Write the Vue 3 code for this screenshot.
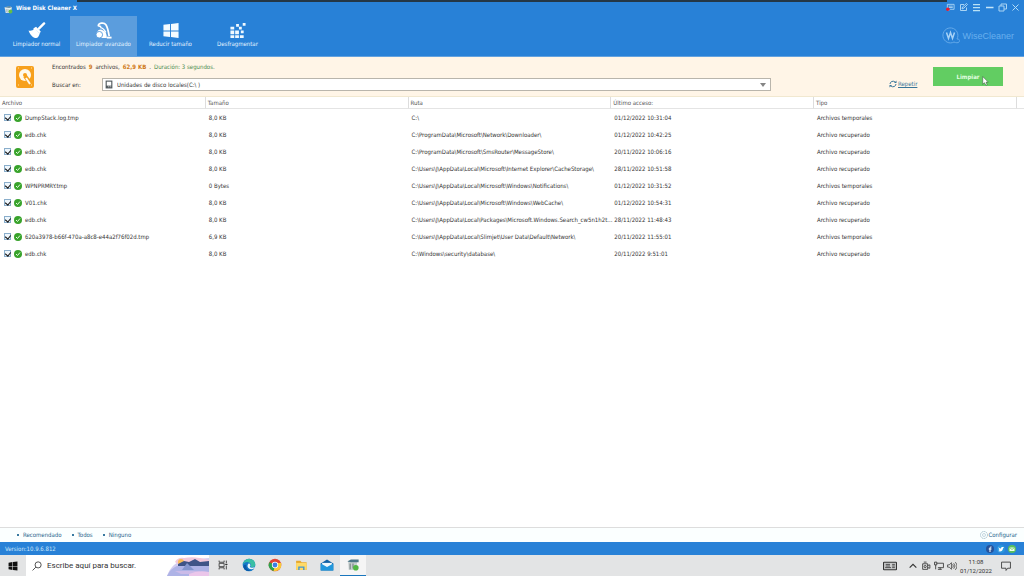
<script setup>
import { ref } from 'vue'

const tabs = [
  { id: 'normal', label: 'Limpiador normal' },
  { id: 'advanced', label: 'Limpiador avanzado' },
  { id: 'reduce', label: 'Reducir tamaño' },
  { id: 'defrag', label: 'Desfragmentar' },
]
const activeTab = ref('advanced')
const query = ref('')

const columns = ['Archivo', 'Tamaño', 'Ruta', 'Último acceso:', 'Tipo']
const temp = 'Archivos temporales'
const recovered = 'Archivo recuperado'
const files = ref([
  { name: 'DumpStack.log.tmp', size: '8,0 KB', path: 'C:\\', date: '01/12/2022 10:31:04', type: temp, checked: true },
  { name: 'edb.chk', size: '8,0 KB', path: 'C:\\ProgramData\\Microsoft\\Network\\Downloader\\', date: '01/12/2022 10:42:25', type: recovered, checked: true },
  { name: 'edb.chk', size: '8,0 KB', path: 'C:\\ProgramData\\Microsoft\\SmsRouter\\MessageStore\\', date: '20/11/2022 10:06:16', type: recovered, checked: true },
  { name: 'edb.chk', size: '8,0 KB', path: 'C:\\Users\\J\\AppData\\Local\\Microsoft\\Internet Explorer\\CacheStorage\\', date: '28/11/2022 10:51:58', type: recovered, checked: true },
  { name: 'WPNPRMRY.tmp', size: '0 Bytes', path: 'C:\\Users\\J\\AppData\\Local\\Microsoft\\Windows\\Notifications\\', date: '01/12/2022 10:31:52', type: temp, checked: true },
  { name: 'V01.chk', size: '8,0 KB', path: 'C:\\Users\\J\\AppData\\Local\\Microsoft\\Windows\\WebCache\\', date: '01/12/2022 10:54:31', type: recovered, checked: true },
  { name: 'edb.chk', size: '8,0 KB', path: 'C:\\Users\\J\\AppData\\Local\\Packages\\Microsoft.Windows.Search_cw5n1h2t...', date: '28/11/2022 11:48:43', type: recovered, checked: true },
  { name: '620a3978-b66f-470a-a8c8-e44a2f76f02d.tmp', size: '6,9 KB', path: 'C:\\Users\\J\\AppData\\Local\\Slimjet\\User Data\\Default\\Network\\', date: '20/11/2022 11:55:01', type: temp, checked: true },
  { name: 'edb.chk', size: '8,0 KB', path: 'C:\\Windows\\security\\database\\', date: '20/11/2022 9:51:01', type: recovered, checked: true },
])
const setAll = (value) => files.value.forEach((f) => (f.checked = value))
</script>

<template>
  <div class="screen">
    <header class="top">
      <div class="strip"></div>
      <div class="titlebar">
        <svg class="app-icon" viewBox="0 0 16 16"><path d="M1 4l9-2 4 2-2 10H3z" fill="#e4eef0" /><path d="M1 4l9-2 4 2-5 1z" fill="#416f86" /><path d="M4 7v6M7 7v7" stroke="#7d8f96" /><circle cx="11.500" cy="11.500" r="3.500" fill="#64bd48" /></svg>
        <h1>Wise Disk Cleaner X</h1>
        <div class="window-tools">
          <button aria-label="Comentarios"><svg viewBox="0 0 20 18"><path d="M3 2h15v11H9l-4 3v-3H3z" fill="none" stroke="#a9d4f4" stroke-width="2" /><path d="M6 6h9M6 9h9" stroke="#a9d4f4" stroke-width="2" /><circle cx="4" cy="13" r="4" fill="#e81830" /></svg></button>
          <button aria-label="Editar"><svg viewBox="0 0 18 18"><path d="M10 3H3v12h12V9M6 12l1-4 8-7 2 2-7 7z" fill="none" stroke="#a9d4f4" stroke-width="2" /></svg></button>
          <button aria-label="Menú"><svg viewBox="0 0 18 18"><path d="M2 3h14M2 9h14M2 15h14" stroke="#b9e2f5" stroke-width="2.500" /></svg></button>
          <button aria-label="Minimizar"><svg viewBox="0 0 18 18"><path d="M2 9h15" stroke="#c4e5f8" stroke-width="3" /></svg></button>
          <button aria-label="Restaurar"><svg viewBox="0 0 18 18"><path d="M2 6h10v10H2zM6 6V2h11v10h-5" fill="none" stroke="#a9d4f4" stroke-width="2" /></svg></button>
          <button aria-label="Cerrar"><svg viewBox="0 0 18 18"><path d="M3 3l12 12M15 3L3 15" stroke="#b4dcf7" stroke-width="2" /></svg></button>
        </div>
      </div>
      <div class="ribbon">
        <nav class="tabs">
          <button v-for="tab in tabs" :key="tab.id" class="tab" :class="{ active: tab.id === activeTab }" @click="activeTab = tab.id">
            <svg v-if="tab.id === 'normal'" viewBox="0 0 18 18"><path d="M16.500 1.500L11 7" stroke="#fff" stroke-width="2.500" stroke-linecap="round" /><path d="M8 5l5 5-1 2-7-5z" fill="#fff" /><path d="M6 7l6 5c-1 3-2 5-4 5-3 0-6-3-8-8 2 1 5 0 6-2z" fill="#fff" /></svg>
            <svg v-else-if="tab.id === 'advanced'" viewBox="0 0 18 18"><path d="M6 5L3 4C3 1 9 0 11 3q2 3 3.500 12" fill="none" stroke="#fff" stroke-width="1.800" stroke-linejoin="round" /><path d="M5 6q3 0 6 5" fill="none" stroke="#fff" stroke-width="1.300" /><path d="M12 16.500h5" stroke="#fff" stroke-width="2" /><path d="M2 10c1-2 4-3 6-1 3 1 4 4 4 8H6z" fill="#fff" /><circle cx="4" cy="13.500" r="3.500" fill="#fff" stroke="#5b9ddd" /></svg>
            <svg v-else-if="tab.id === 'reduce'" viewBox="0 0 18 18"><path d="M1 3l7-1v7H1zM9 2l8-1v8H9zM1 10h7v6l-7-1zM9 10h8v7l-8-1z" fill="#f4fbff" /></svg>
            <svg v-else viewBox="0 0 18 18"><path d="M1 5h4v3H1zM1 9h4v4H1zM6 9h4v4H6zM1 14h4v3H1zM6 14h4v3H6zM11 14h4v3h-4zM7 2h3v3H7zM14 1h3v3h-3zM10 5h3v3h-3zM12 9h3v3h-3z" fill="#f0f9ff" /></svg>
            <span>{{ tab.label }}</span>
          </button>
        </nav>
        <div class="brand">
          <svg viewBox="0 0 18 18"><path d="M15 12a7.500 7.500 0 1 0-3 3c2 1 4 1 5 0s1-3-2-3" fill="none" stroke="#65aaea" /><path d="M4.500 5.500l2 6 2-6 2 6 2-6" fill="none" stroke="#a7d2f7" stroke-width="1.500" /></svg>
          <span>WiseCleaner</span>
        </div>
      </div>
    </header>

    <section class="panel">
      <svg class="disk" viewBox="0 0 20 22"><rect x="1" width="18" height="22" rx="2" fill="#f7a01c" /><circle cx="10" cy="9" r="6" fill="#fff9ed" /><circle cx="10" cy="9" r="2" fill="#f7a01c" /><path d="M10 10l5 7" stroke="#f7a01c" stroke-width="4" /><path d="M11 12l4 6" stroke="#fff9ed" stroke-width="2" /><path d="M3 2h1M16 2h1M3 19h1M16 19h1" stroke="#ffe0a0" /></svg>
      <div class="scan">
        <p class="summary"><span>Encontrados</span><b>9</b><span>archivos,</span><b>62,9 KB</b><span>.</span><em>Duración: 3 segundos.</em></p>
        <div class="search-row">
          <label for="drive">Buscar en:</label>
          <div class="drive-box">
            <svg viewBox="0 0 14 16"><rect x="1" y="1" width="12" height="14" fill="#50585c" /><rect x="3" y="3" width="8" height="7" fill="#fff" /><path d="M5 12h2M8 12h3" stroke="#fff" /></svg>
            <select id="drive"><option>Unidades de disco locales(C:\ )</option></select>
            <i class="arrow"></i>
          </div>
        </div>
      </div>
      <a class="repeat" href="#"><svg viewBox="0 0 16 16"><path d="M2 8a6 6 0 0 1 10-4M14 8a6 6 0 0 1-10 4" fill="none" stroke="#387599" stroke-width="2" /><path d="M10 6h5V1zM6 10H1v5z" fill="#387599" /></svg><span>Repetir</span></a>
      <button class="clean">Limpiar
        <svg class="cursor" viewBox="0 0 12 18"><path d="M1 1v14l3-3 3 5 2-1-2-5h4z" fill="#fff" stroke="#38583a" /></svg>
      </button>
    </section>

    <main class="list">
      <table>
        <colgroup><col class="first" /><col v-for="n in 4" :key="n" class="mid" /><col /></colgroup>
        <thead>
          <tr><th v-for="c in columns" :key="c" scope="col">{{ c }}</th><th></th></tr>
        </thead>
        <tbody>
          <tr v-for="(file, i) in files" :key="i">
            <td>
              <label class="file">
                <input v-model="file.checked" type="checkbox" />
                <svg viewBox="0 0 16 16"><circle cx="8" cy="8" r="8" fill="#39a32c" /><path d="M4 8l3 3 5-6" fill="none" stroke="#e4ffe0" stroke-width="2" /></svg>
                <span>{{ file.name }}</span>
              </label>
            </td>
            <td>{{ file.size }}</td>
            <td>{{ file.path }}</td>
            <td>{{ file.date }}</td>
            <td>{{ file.type }}</td>
            <td></td>
          </tr>
        </tbody>
      </table>
    </main>

    <div class="options">
      <button @click="setAll(true)"><i></i>Recomendado</button>
      <button @click="setAll(true)"><i></i>Todos</button>
      <button @click="setAll(false)"><i></i>Ninguno</button>
      <button class="configure"><svg viewBox="0 0 16 16"><circle cx="8" cy="8" r="7" fill="none" stroke="#8fb0c0" stroke-width="1.500" stroke-dasharray="3 1" /><circle cx="8" cy="8" r="3" fill="none" stroke="#8fb0c0" /></svg>Configurar</button>
    </div>

    <footer class="version">
      <span>Version:10.9.6.812</span>
      <a href="#" aria-label="Facebook"><svg viewBox="0 0 16 16"><circle cx="8" cy="8" r="8" fill="#24529b" /><path d="M11 4H9.500Q8 4 8 6v8M5.500 8H11" fill="none" stroke="#fff" stroke-width="2" /></svg></a>
      <a href="#" aria-label="Twitter"><svg viewBox="0 0 16 16"><circle cx="8" cy="8" r="8" fill="#2a96dc" /><path d="M3 4q2 3 5 3 0-4 3-3l3 0-2 3q-1 6-6 6l-4-1 3-1-2-2h2Q3 7 3 4z" fill="#fff" /></svg></a>
      <a href="#" aria-label="Correo"><svg viewBox="0 0 16 16"><circle cx="8" cy="8" r="8" fill="#58bf5c" /><path d="M3 5h10v7H3z" fill="#efffed" /><path d="M3 5l5 4 5-4" fill="none" stroke="#58bf5c" stroke-width="1.500" /></svg></a>
    </footer>

    <div class="taskbar">
      <button class="start" aria-label="Inicio"><svg viewBox="0 0 18 18"><path d="M1 3l7-1v7H1zM9 2l8-1v8H9zM1 10h7v6l-7-1zM9 10h8v7l-8-1z" fill="#111" /></svg></button>
      <label class="find">
        <svg class="lens" viewBox="0 0 18 18"><circle cx="11" cy="7" r="5.500" fill="none" stroke="#333" stroke-width="1.500" /><path d="M7 11l-6 6" stroke="#333" stroke-width="1.500" /></svg>
        <input v-model="query" type="text" aria-label="Buscar" placeholder="Escribe aquí para buscar." />
        <svg class="scene" viewBox="0 0 42 21"><path d="M0 21Q5 7 18 5L42 3v18z" fill="#d2cdf0" /><path d="M8 7q3-5 9-4 12-2 25 2v5H12z" fill="#f2c9dc" /><circle cx="14" cy="7" r="3" fill="#f8bc58" /><path d="M11 9l6-3 5 1 6-3 5 3 9-1v5H11z" fill="#3f5487" /><path d="M0 21q4-8 10-10h32v10z" fill="#aeb3e6" /><path d="M15 15l5-7 7 7z" fill="#8495cd" /><path d="M8 16h26l-5 3H14z" fill="#cbbbe8" /><path d="M22 19q9-4 20-2v4H22z" fill="#ebc6ea" /></svg>
      </label>
      <div class="apps">
        <button aria-label="Vista de tareas"><svg class="small" viewBox="0 0 18 18"><path d="M2 1v3h9V1M2 17v-3h9v3M2 6h9v6H2zM15 1v5M15 10v7" fill="none" stroke="#333" stroke-width="1.500" /><path d="M13 8h4" stroke="#333" stroke-width="2" /></svg></button>
        <button aria-label="Edge"><svg viewBox="0 0 20 20"><circle cx="10" cy="10" r="9" fill="#1679c8" /><path d="M1 9Q3 1 11 1q8 1 8 9-1 4-7 3 2-4-1-6-5-3-10 2z" fill="#38bea5" /><path d="M6 10q-1 6 6 8-8 2-10-5 0-4 4-3z" fill="#0b58a6" /><path d="M10 8q2 0 2 3l-1 2q4 2 8-1-2 4-6 4-6-1-5-6 1-2 2-2z" fill="#eaf7fb" /></svg></button>
        <button aria-label="Chrome"><svg viewBox="0 0 20 20"><circle cx="10" cy="10" r="9" fill="#e24435" /><path d="M10 10L2 6q-4 8 6 13z" fill="#2da44f" /><path d="M10 10L8 19q12 0 11-12h-9z" fill="#f9c937" /><circle cx="10" cy="10" r="4.500" fill="#fff" /><circle cx="10" cy="10" r="3.500" fill="#3c7ee4" /></svg></button>
        <button aria-label="Explorador de archivos"><svg viewBox="0 0 20 20"><path d="M3 4h6l2 2h7v11H3z" fill="#e7a82e" /><path d="M3 7h15v10H3z" fill="#ffda68" /><path d="M6 17v-5h9v5h-2v-3H8v3z" fill="#4597d0" /></svg></button>
        <button aria-label="Correo"><svg viewBox="0 0 20 20"><path d="M1 8l9-6 9 6v10H1z" fill="#1263a6" /><path d="M3 7h14v6H3z" fill="#eef8fd" /><path d="M1 8l9 5 9-5v10H1z" fill="#2197dc" /></svg></button>
        <button class="running" aria-label="Wise Disk Cleaner"><svg viewBox="0 0 20 20"><path d="M3 4h13l-1 13H4z" fill="#c6cfcf" /><path d="M2 5l5-3h11v4H7z" fill="#4d7788" /><path d="M6 8v8M10 8v7" stroke="#869292" stroke-width="2" /><circle cx="14" cy="14" r="4" fill="#51b744" /></svg></button>
      </div>
      <div class="tray">
        <svg class="keyboard" viewBox="0 0 26 18"><rect x="1" y="2" width="24" height="14" rx="1" fill="#c9cacb" stroke="#333" stroke-width="2" /><path d="M5 6h8M5 9h8M4 12h11M17 6h5M17 9h5M17 12h5" stroke="#333" stroke-width="1.500" /></svg>
        <svg viewBox="0 0 18 18"><path d="M3 12l6-6 6 6" fill="none" stroke="#333" stroke-width="2" /></svg>
        <svg viewBox="0 0 18 18"><path d="M3 5h9v10H3zM5 2h5M12 8l4-1v6l-4-1" fill="none" stroke="#333" stroke-width="1.500" /><circle cx="7.500" cy="10" r="2" fill="none" stroke="#333" stroke-width="1.500" /></svg>
        <svg viewBox="0 0 18 18"><path d="M5 4h12v8H7M11 12v3M7 15h7M1 2h4v5H1zM3 7v8" fill="none" stroke="#333" stroke-width="1.500" /></svg>
        <svg viewBox="0 0 18 18"><path d="M1 7h3l4-4v12l-4-4H1zM10 6q3 3 0 6M12 4q5 5 0 10M15 2q6 7 0 14" fill="none" stroke="#333" stroke-width="1.300" /></svg>
        <time><span>11:08</span><span>01/12/2022</span></time>
        <svg class="notice" viewBox="0 0 18 18"><path d="M1 2h16v11h-5l-3 4v-4H1z" fill="none" stroke="#333" stroke-width="1.500" /></svg>
      </div>
    </div>
  </div>
</template>

<style>
body { margin: 0; }
</style>

<style scoped>
* { box-sizing: border-box; }
.screen { display: flex; flex-direction: column; min-height: 100vh; background: #fff; color: #333; font: 6px/8px "DejaVu Sans Condensed", "Noto Sans", sans-serif; }
button { padding: 0; border: 0; background: none; color: inherit; font: inherit; }
svg { display: block; flex: none; }
a { color: inherit; }

.top { display: flex; flex-direction: column; height: 57px; background: #2881d7; border-bottom: 1px solid #63a2df; color: #fff; }
.strip { height: 2px; margin: 0 77px; background: #243746; }
.titlebar { display: flex; align-items: center; height: 14px; padding: 0 4px; gap: 3px; }
.app-icon { width: 9px; height: 9px; }
h1 { margin: 0; font: inherit; font-weight: bold; line-height: 12px; align-self: flex-start; }
.window-tools { display: flex; gap: 4px; margin-left: auto; align-self: flex-start; padding-top: 1px; }
.window-tools svg { width: 9px; height: 9px; }
.ribbon { display: flex; flex: 1; justify-content: space-between; align-items: stretch; }
.tabs { display: flex; padding-left: 3px; }
.tab { display: flex; flex-direction: column; align-items: center; width: 67px; padding-top: 6px; gap: 1px; color: #e3f4ff; }
.tab.active { background: #5b9ddd; }
.tab svg { width: 18px; height: 17px; }
.brand { display: flex; align-items: center; gap: 2px; padding-right: 10px; color: #69b0ee; font: 9px/12px "Liberation Sans", sans-serif; }
.brand svg { width: 18px; height: 18px; }

.panel { display: flex; align-items: center; height: 40px; background: #fff5e7; border-bottom: 1px solid #f1e8d0; }
.disk { width: 20px; height: 22px; margin-left: 15px; }
.scan { flex: 1; margin-left: 17px; }
.summary { display: flex; gap: 3px; margin: 0 0 7px; line-height: 9px; }
.summary b { color: #cf7919; }
.summary em { color: #4a8c4e; font-style: normal; }
.search-row { display: flex; align-items: center; height: 13px; }
.search-row label { width: 50px; }
.drive-box { position: relative; display: flex; flex: 1; align-items: center; height: 13px; border: 1px solid #b9b5ac; background: #fff; }
.drive-box svg { width: 8px; height: 9px; margin-left: 2px; }
select { flex: 1; height: 11px; padding: 0 4px; border: 0; appearance: none; background: transparent; color: #333; font: inherit; }
.arrow { position: absolute; right: 4px; top: 4px; border: 3px solid transparent; border-top: 4px solid #858585; border-bottom: 0; pointer-events: none; }
.repeat { display: flex; align-items: center; gap: 1px; width: 28px; margin: 15px 16px 0 118px; color: #387599; }
.repeat svg { width: 8px; height: 8px; }
.clean { position: relative; width: 70px; height: 19px; margin-right: 21px; background: #62cd62; color: #e2ffe2; font-weight: bold; }
.cursor { position: absolute; left: 49px; top: 9px; width: 7px; height: 10px; }

.list { flex: 1; }
table { width: 100%; border-collapse: separate; border-spacing: 0; table-layout: fixed; }
.first { width: 20.1%; }
.mid { width: 19.8%; }
th, td { padding: 0; text-align: left; font-weight: normal; white-space: nowrap; }
th { height: 12px; padding-left: 2px; border-right: 1px solid #ddd; border-bottom: 1px solid #e4e4e4; color: #555; }
th:last-child { border-right: 0; }
td { height: 17px; padding-left: 3px; }
.file { display: flex; align-items: center; padding-left: 1px; }
.file svg { width: 8px; height: 8px; margin: 0 3px; }
.file input { position: relative; width: 7px; height: 7px; margin: 0; border: 1px solid #8aaecb; appearance: none; background: #eef6fc; }
.file input:checked::after { content: ""; position: absolute; left: 1px; top: 0; width: 3px; height: 4px; border: solid #111; border-width: 0 1px 1px 0; transform: rotate(40deg); }

.options { display: flex; align-items: center; height: 15px; padding: 0 7px 0 17px; gap: 10px; border-top: 1px solid #ddd; background: #fbffff; color: #26648c; }
.options button { display: flex; align-items: center; gap: 4px; }
.options i { width: 2px; height: 2px; background: #3979a0; }
.options .configure { gap: 1px; margin-left: auto; }
.configure svg { width: 8px; height: 8px; }
.version { display: flex; align-items: center; gap: 3px; height: 13px; padding: 0 8px 0 5px; background: #2881d7; color: #cce8fb; }
.version span { margin-right: auto; }
.version svg { width: 8px; height: 8px; }

.taskbar { display: flex; height: 21px; background: #e3e4e5; }
.start { display: grid; place-items: center; width: 26px; }
.start svg { width: 10px; height: 10px; }
.find { display: flex; align-items: center; width: 183px; padding-left: 6px; background: #fff; }
.lens { width: 10px; height: 10px; }
.find input { flex: 1; min-width: 0; margin-left: 5px; padding: 0; border: 0; outline: 0; font: 8px/12px Roboto, sans-serif; }
.find input::placeholder { color: #333; opacity: 1; }
.scene { width: 42px; height: 21px; }
.apps { display: flex; }
.apps button { display: grid; place-items: center; width: 26px; border-bottom: 1px solid transparent; }
.apps button:first-child { width: 27px; }
.apps svg { width: 14px; height: 14px; }
.apps .small { width: 10px; height: 10px; }
.apps .running { background: #f5f5f5; border-bottom-color: #1a76bd; }
.tray { display: flex; align-items: center; gap: 3px; margin-left: auto; padding-right: 13px; }
.tray svg { width: 10px; height: 10px; }
.tray .keyboard { width: 14px; height: 10px; margin-right: 8px; }
time { display: flex; flex-direction: column; align-items: center; width: 32px; font: 6px/9px Roboto, sans-serif; }
.tray .notice { margin-left: 6px; }
</style>
